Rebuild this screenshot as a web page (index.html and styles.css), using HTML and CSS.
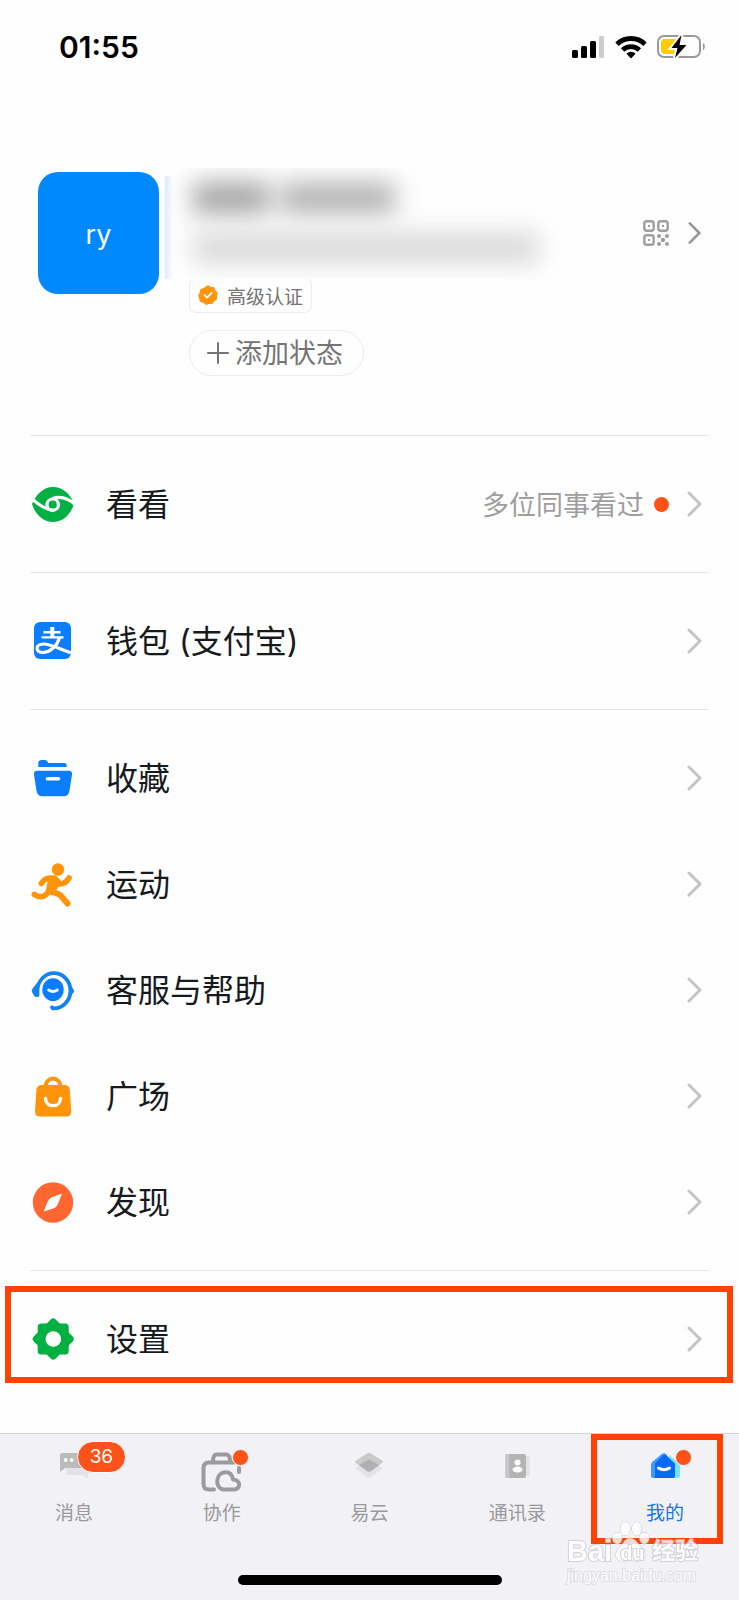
FILE: index.html
```html
<!DOCTYPE html>
<html lang="zh-CN">
<head>
<meta charset="utf-8">
<meta name="viewport" content="width=device-width, initial-scale=1">
<title>我的</title>
<link rel="stylesheet" href="styles.css">
</head>
<body>
<svg class="defs" aria-hidden="true">
  <symbol id="chevron" viewBox="0 0 16 28"><path d="M2 3l11 11L2 25" fill="none" stroke="currentColor" stroke-width="3" stroke-linecap="round" stroke-linejoin="round"/></symbol>
</svg>

<header class="status-bar">
  <time class="clock">01:55</time>
  <div class="status-icons">
    <svg width="33" height="24" viewBox="0 0 33 24"><rect x="0" y="15" width="6" height="8" rx="1.500"/><rect x="9" y="11" width="6" height="12" rx="1.500"/><rect x="18" y="6" width="6" height="17" rx="1.500"/><rect x="27" y="1" width="5" height="22" rx="1.500" fill="#ccc"/></svg>
    <svg width="32" height="24" viewBox="0 0 32 24"><g fill="none" stroke="#000" stroke-width="4.800"><path d="M2 9.200a20 20 0 0 1 28 0"/><path d="M7.600 15a12.200 12.200 0 0 1 16.800 0"/></g><path d="M16 23.500l-4.600-4.800a6.600 6.600 0 0 1 9.200 0z"/></svg>
    <svg width="50" height="26" viewBox="0 0 50 26"><rect x="1" y="2" width="42" height="21" rx="6" fill="none" stroke="#999" stroke-width="2"/><path d="M46 8.500q3.600 4 0 8z" fill="#999"/><path d="M8 5h15v15H8a4 4 0 0 1-4-4V9a4 4 0 0 1 4-4z" fill="#fc0"/><path d="M24.500 1L14.500 14h6l-2.500 10L29.500 11h-7z" stroke="#fefefe" stroke-width="4" fill="#fefefe"/><path d="M24.500 1L14.500 14h6l-2.500 10L29.500 11h-7z"/></svg>
  </div>
</header>

<main class="content">
  <section class="profile">
    <div class="avatar">ry</div>
    <div class="profile-info">
      <div class="hidden-info" aria-hidden="true"><div class="edge"></div><div class="smudge smudge-name"><i></i><i></i></div><div class="smudge smudge-org"></div></div>
      <div class="cert">
        <svg width="20" height="20" viewBox="0 0 20 20"><path d="M10 .7l2.700 1.700 3.200.2 1.100 3 2.300 2.200-.7 3.100.1 3.200-2.700 1.700-1.700 2.700-3.200-.1L8 19.400l-2.600-2-3-.8-.8-3.100L.6 10.500l1.500-2.700.6-3.200 2.900-1.200z" fill="#ff940a" stroke="#ff940a" stroke-linejoin="round"/><path d="M6.500 10l2.500 2.600 4.600-4.600" fill="none" stroke="#fff" stroke-width="1.800" stroke-linecap="round" stroke-linejoin="round"/></svg>
        <span>高级认证</span>
      </div>
      <button class="add-status" type="button"><svg width="24" height="24" viewBox="0 0 24 24"><path d="M12 2v20M2 12h20" stroke="#747474" stroke-width="2" stroke-linecap="round"/></svg><span>添加状态</span></button>
    </div>
    <a class="profile-link" href="#" aria-label="二维码">
      <svg width="26" height="26" viewBox="0 0 26 26"><g fill="none" stroke="#9e9e9e" stroke-width="2.400"><rect x="1.300" y="1.300" width="9.400" height="9.400" rx="2.500"/><rect x="15.300" y="1.300" width="9.400" height="9.400" rx="2.500"/><rect x="1.300" y="15.300" width="9.400" height="9.400" rx="2.500"/></g><g fill="#9e9e9e"><path d="M5 5h2v2H5zM19 5h2v2h-2zM5 19h2v2H5z"/><circle cx="16" cy="16" r="2"/><circle cx="24" cy="16" r="2"/><circle cx="20" cy="20" r="2.200"/><circle cx="16" cy="24" r="2"/><circle cx="24" cy="24" r="2"/></g></svg>
      <svg class="chevron chevron-dark"><use href="#chevron"/></svg>
    </a>
  </section>

  <nav class="menu">
    <div class="group">
      <a class="row" href="#">
        <svg class="icon" viewBox="0 0 48 48"><path d="M3 24C8 13 15 7 24 7c9 0 17 6 21 17-4 12-12 18-21 18C14 42 6 34 3 24z" fill="#00b042"/><g fill="none" stroke="#fefefe" stroke-width="3.200"><path d="M2 17.500C8 24 15 29 25 30.500M23 18.700C32 15.500 39 18 46 24.500"/><circle cx="23.700" cy="24.700" r="5.700"/></g></svg>
        <span class="label">看看</span><span class="note">多位同事看过</span><span class="dot"></span>
        <svg class="chevron"><use href="#chevron"/></svg>
      </a>
    </div>
    <div class="group">
      <a class="row" href="#">
        <svg class="icon" viewBox="0 0 48 48"><rect x="5" y="5" width="37" height="37" rx="6" fill="#0a7eff"/><g fill="none" stroke="#fff"><path d="M23.300 10v10" stroke-width="4"/><path d="M14.500 15.300h17M12.500 20.400h22" stroke-width="2.400"/><path d="M30.500 20.500C28 30 20 35.500 14 35.500c-8 0-8-8.500.5-8.500C21 27 31 32 42 35.800" stroke-width="3.200"/></g></svg>
        <span class="label">钱包 (支付宝)</span>
        <svg class="chevron"><use href="#chevron"/></svg>
      </a>
    </div>
    <div class="group">
      <a class="row" href="#">
        <svg class="icon" viewBox="0 0 48 48" fill="#0a7eff"><path d="M9.300 13V9Q9.500 6 12.500 6H16q1.500 0 2.300 1.300L19.500 9H35q2.700 0 2.700 2.700V13zM8 16.700h32q3.500.3 3 4l-2.500 16q-.9 5.600-6 5.600h-21q-5.100 0-6-5.600L5 20.700q-.5-3.700 3-4z"/><path d="M18.500 24.800h11" stroke="#fff" stroke-width="3.600" stroke-linecap="round"/></svg>
        <span class="label">收藏</span>
        <svg class="chevron"><use href="#chevron"/></svg>
      </a>
      <a class="row" href="#">
        <svg class="icon" viewBox="0 0 48 48"><circle cx="29" cy="9.500" r="6.200" fill="#ff940a"/><path d="M19 18.500l8-1.500q3.500 1 5.500 5l-7 11-9 1z" fill="#ff940a"/><g fill="none" stroke="#ff940a" stroke-linecap="round" stroke-linejoin="round"><path d="M12.300 23.500q3.500-5.500 8.500-5.500h5q2 5 5 6 5.500 0 9.200-6" stroke-width="5.600"/><path d="M23 21q-2 12-8 15-3.500 2-9.700-1.500" stroke-width="5.600"/><path d="M20 31.500q11 2 12.500 5l6 7" stroke-width="6"/></g></svg>
        <span class="label">运动</span>
        <svg class="chevron"><use href="#chevron"/></svg>
      </a>
      <a class="row" href="#">
        <svg class="icon" viewBox="0 0 48 48"><path d="M8.500 29V24A16.500 17.600 0 1 1 24 42.300l-1-1" fill="none" stroke="#1282f0" stroke-width="3.800" stroke-linecap="round" stroke-linejoin="round"/><path d="M8 17v14q-3 0-3.500-2.500L3 26q-.7-1.500.3-3zM40 17l3.800 5.500q2 2 .8 4L40 32z" fill="#1282f0"/><ellipse cx="24" cy="23.700" rx="10.700" ry="11.500" fill="#0a7eff"/><path d="M19.700 24q4.300 3 8.600 0" fill="none" stroke="#fff" stroke-width="2.800" stroke-linecap="round"/></svg>
        <span class="label">客服与帮助</span>
        <svg class="chevron"><use href="#chevron"/></svg>
      </a>
      <a class="row" href="#">
        <svg class="icon" viewBox="0 0 48 48"><path d="M16.500 15.500c0-12 15-12 15 0" fill="none" stroke="#ff940a" stroke-width="4"/><path d="M13 13h22.300q5 0 5.500 5l1.400 21q.2 5.500-4.800 5.500h-26.500q-5.200 0-4.900-5.500l1.400-21Q8 13 13 13z" fill="#ff940a"/><path d="M16.500 26.500c.5 9.500 14.500 9.500 15 0" fill="none" stroke="#fff" stroke-width="3.400" stroke-linecap="round"/></svg>
        <span class="label">广场</span>
        <svg class="chevron"><use href="#chevron"/></svg>
      </a>
      <a class="row" href="#">
        <svg class="icon" viewBox="0 0 48 48"><circle cx="24" cy="24.500" r="20.200" fill="#ff6630"/><path d="M32.300 16.300L28 27q-.7 1.500-2.300 2.400l-10.400 3.500 4.300-10.200q.7-1.500 2.300-2.500z" fill="#fff" stroke="#fff" stroke-linejoin="round"/></svg>
        <span class="label">发现</span>
        <svg class="chevron"><use href="#chevron"/></svg>
      </a>
    </div>
    <div class="group">
      <a class="row row-marked" href="#">
        <svg class="icon" viewBox="0 0 48 48" fill="#00b042"><rect x="8.700" y="8.500" width="31" height="31" rx="3.500"/><rect x="8.700" y="8.500" width="31" height="31" rx="3.500" transform="rotate(45 24.200 24)"/><circle cx="24.300" cy="24" r="7.800" fill="#fff"/></svg>
        <span class="label">设置</span>
        <svg class="chevron"><use href="#chevron"/></svg>
      </a>
    </div>
  </nav>
</main>

<footer class="tab-bar">
  <nav class="tabs">
    <a class="tab" href="#">
      <span class="tab-icon"><svg viewBox="0 0 48 56"><path d="M15 26h23v12l-5-4H17z" fill="#e3e2e6"/><path d="M10 31V14q0-2 2-2h22v15H15z" fill="#bbb"/><circle cx="15.700" cy="19" r="2" fill="#fff"/><circle cx="21.700" cy="19" r="2" fill="#fff"/></svg><span class="count">36</span></span>
      <span class="tab-label">消息</span>
    </a>
    <a class="tab" href="#">
      <span class="tab-icon"><svg viewBox="0 0 48 56" fill="none" stroke="#9b9b9b" stroke-width="4" stroke-linecap="round" stroke-linejoin="round"><path d="M16 48.500h-5q-5.500 0-5.500-5.500V27q0-5.500 5.500-5.500h25M41 27v4M15 20.500q0-7 4-7h9q4 0 4 7M25 48.500c-8.500-2-7.500-17 2.500-17.200 5 0 7 3.700 7.500 7.200 8 .5 8 9.500 1 10z"/></svg><span class="tab-dot"></span></span>
      <span class="tab-label">协作</span>
    </a>
    <a class="tab" href="#">
      <span class="tab-icon"><svg viewBox="0 0 48 56"><path d="M10 27l12 9.500q2 1.300 4 0L38 27l-14-6z" fill="#e4e3e7"/><path d="M22 12.500q2-1.300 4 0l11 7q2 1.200 0 2.600l-11 7.900q-2 1.300-4 0l-11-7.900q-2-1.400 0-2.600z" fill="#cacaca"/><path d="M22.500 19q1.500-.9 3 0l8.500 5.300-8 5.700q-2 1.300-4 0l-8-5.700z" fill="#b0b0b0"/></svg></span>
      <span class="tab-label">易云</span>
    </a>
    <a class="tab" href="#">
      <span class="tab-icon"><svg viewBox="0 0 48 56"><path d="M30 15h6.700v20H30z" fill="#e2e1e5"/><rect x="12.500" y="13" width="20.500" height="24" rx="2" fill="#b3b3b3"/><path d="M12.500 13h4v24h-4z" fill="#c6c6c6"/><circle cx="24.500" cy="21.500" r="3" fill="#fff"/><ellipse cx="24.500" cy="28.500" rx="5" ry="3" fill="#fff"/></svg></span>
      <span class="tab-label">通讯录</span>
    </a>
    <a class="tab tab-active" href="#" aria-current="page">
      <span class="tab-icon"><svg viewBox="0 0 48 56"><path d="M28 14l11 9v12q0 2-2 2h-8z" fill="#78e4ff"/><path d="M10 35V24q0-2 1.500-3.300l9-7.500Q23 11.500 25 13l7 9v15H12q-2 0-2-2z" fill="#3a9bfa"/><path d="M14 37V22.500l8-8.200q1.300-1.300 2.600 0L34 22.500V35q0 2-2 2z" fill="#0a68f4"/><path d="M17.500 27q5.500 3.500 11 0" fill="none" stroke="#fff" stroke-width="3" stroke-linecap="round"/></svg><span class="tab-dot"></span></span>
      <span class="tab-label">我的</span>
    </a>
  </nav>
  <div class="home-indicator"></div>
  <div class="watermark">
    <div class="wm-brand"><span>Bai</span><span class="wm-paw"><svg viewBox="0 0 40 48" fill="#fff" stroke="#bbb"><ellipse cx="5.500" cy="19" rx="5" ry="6"/><ellipse cx="14" cy="9" rx="5" ry="7"/><ellipse cx="26" cy="9" rx="5" ry="7"/><ellipse cx="34" cy="19" rx="5" ry="6"/><path d="M19 19c6 0 8 6 13 11 6 7 1 14-6 13-5-1-8-1-13 0-8 1-12-6-6-13 5-5 6-11 12-11z"/></svg><span class="wm-du">du</span></span><span class="wm-cn">经验</span></div>
    <div class="wm-url">jingyan.baidu.com</div>
  </div>
</footer>
</body>
</html>
```
FILE: styles.css
```css
* { box-sizing: border-box; }

body {
  margin: 0;
  min-height: 100vh;
  display: flex;
  flex-direction: column;
  background: #fefefe;
  color: #171a1d;
  font-family: "Noto Sans CJK SC", "Noto Sans", sans-serif;
}

a { color: inherit; text-decoration: none; }
svg { display: block; flex: none; }
.defs { position: absolute; width: 0; height: 0; }

.status-bar {
  display: flex;
  align-items: center;
  justify-content: space-between;
  height: 94px;
  padding: 0 32px 0 59px;
  color: #000;
}
.clock { font: 600 30px/36px Inter, sans-serif; }
.status-icons { display: flex; align-items: center; gap: 10px; }

.content { flex: 1; }

.profile {
  display: flex;
  align-items: flex-start;
  height: 341px;
  padding: 74px 37px 0 38px;
}
.avatar {
  display: grid;
  place-items: center;
  width: 121px;
  height: 122px;
  margin-top: 4px;
  padding-top: 3px;
  border-radius: 20px;
  background: #0089ff;
  color: #fff;
  font: 27px/32px Inter, sans-serif;
}
.profile-info {
  flex: 1;
  display: flex;
  flex-direction: column;
  align-items: flex-start;
  padding-left: 30px;
}
.hidden-info {
  position: relative;
  z-index: 1;
  align-self: stretch;
  height: 111px;
  margin-left: -24px;
  padding: 14px 0 0 28px;
  overflow: hidden;
  background: #fefefe;
}
.edge {
  position: absolute;
  inset: 8px auto 0 0;
  width: 8px;
  background: linear-gradient(90deg, #d9eaff, #fefefe);
}
.smudge { filter: blur(12px); }
.smudge-name { display: flex; gap: 12px; height: 32px; }
.smudge-name i { width: 76px; background: #a6a6a6; }
.smudge-name i + i { width: 114px; background: #b4b4b4; }
.smudge-org { width: 346px; height: 32px; margin-top: 18px; background: #dadada; }
.cert {
  display: flex;
  align-items: center;
  gap: 9px;
  height: 36px;
  margin-top: -2px;
  padding: 0 8px;
  border: 1px solid #ececec;
  border-radius: 8px;
  color: #747474;
  font-size: 19px;
}
.add-status {
  display: flex;
  align-items: center;
  gap: 5px;
  height: 46px;
  margin-top: 17px;
  padding: 0 20px 0 16px;
  border: 1px solid #ececec;
  border-radius: 23px;
  background: none;
  color: #747474;
  font: inherit;
  font-size: 27px;
  line-height: 40px;
}
.add-status span { padding-bottom: 2px; }
.profile-link {
  display: flex;
  align-items: center;
  gap: 19px;
  height: 28px;
  margin-top: 51px;
}
.chevron { width: 16px; height: 28px; color: #c4c4c4; }
.chevron-dark { width: 14px; color: #999; }

.group {
  position: relative;
  margin: 0 30px;
  padding: 15px 0;
  border-top: 1px solid #e4e4e5;
}
.row {
  display: flex;
  align-items: center;
  height: 106px;
  padding-right: 6px;
}
.icon { width: 48px; height: 48px; margin-left: -1px; }
.label {
  flex: 1;
  margin-left: 29px;
  padding-top: 2px;
  font-family: Inter, "Noto Sans CJK SC", sans-serif;
  font-size: 32px;
  line-height: 48px;
}
.note { padding-bottom: 2px; color: #9e9e9e; font-size: 27px; }
.dot { width: 15px; height: 15px; margin: 0 18px 0 10px; border-radius: 50%; background: #ff5219; }
.row-marked::after {
  content: "";
  position: absolute;
  inset: 15px -24px 24px -25px;
  border: 6px solid #ff4200;
}

.tab-bar {
  position: relative;
  display: flex;
  flex-direction: column;
  align-items: center;
  height: 167px;
  padding-bottom: 15px;
  border-top: 1px solid #d2d1d6;
  background: #f2f1f6;
}
.tabs { display: flex; flex: 1; align-self: stretch; }
.tab {
  position: relative;
  flex: 1;
  display: flex;
  flex-direction: column;
  align-items: center;
  padding-top: 7px;
  color: #999;
}
.tab-icon { position: relative; width: 48px; height: 56px; }
.tab-label { font-size: 19px; line-height: 30px; }
.tab-active { color: #1476f0; }
.tab-active::after {
  content: "";
  position: absolute;
  inset: 0 16px 31px 0;
  border: 6px solid #ff4200;
}
.count {
  position: absolute;
  top: 0;
  left: 27px;
  width: 49px;
  height: 32px;
  border: 1px solid #fff;
  border-radius: 16px;
  background: #ff5219;
  color: #fff;
  font: 19px/30px Inter, sans-serif;
  text-align: center;
}
.tab-dot {
  position: absolute;
  top: 8px;
  left: 34px;
  width: 17px;
  height: 17px;
  border: 1px solid #f2f1f6;
  border-radius: 50%;
  background: #ff5219;
}
.home-indicator { width: 264px; height: 10px; border-radius: 5px; background: #000; }

.watermark {
  position: absolute;
  right: 38px;
  bottom: 14px;
  width: 134px;
  color: #fff;
  opacity: 0.8;
  font-family: "Liberation Sans", "Noto Sans CJK SC", sans-serif;
  -webkit-text-stroke: 2px #ccc;
  paint-order: stroke fill;
}
.wm-brand { display: flex; align-items: flex-end; font-size: 29px; font-weight: 700; line-height: 30px; }
.wm-paw { position: relative; width: 38px; height: 46px; }
.wm-paw svg { width: 38px; height: 46px; }
.wm-du { position: absolute; left: 8px; bottom: 1px; font-size: 20px; line-height: 24px; }
.wm-cn { margin-left: 2px; font-size: 23px; }
.wm-url { font-size: 16px; line-height: 20px; -webkit-text-stroke: 2px #dcdbe0; }
```
